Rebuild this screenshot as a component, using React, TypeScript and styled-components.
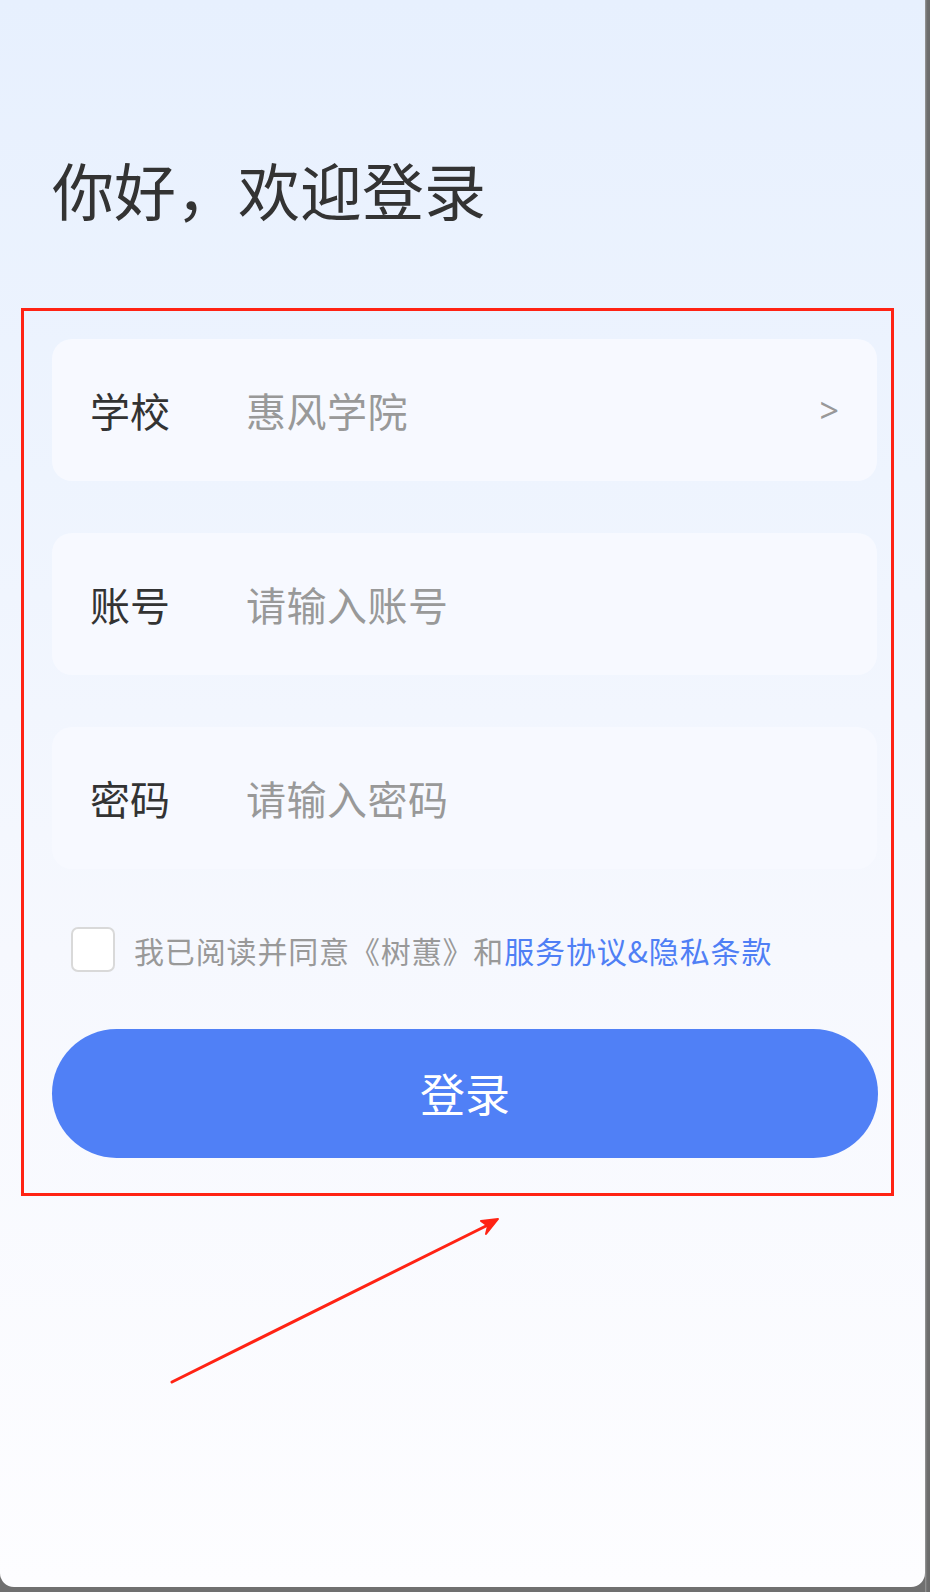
import React from "react";
import styled, { createGlobalStyle } from "styled-components";

const GlobalStyle = createGlobalStyle`
  html, body {
    margin: 0;
    padding: 0;
    background: #5c5c5c;
  }
  * {
    box-sizing: border-box;
  }
`;

const Screen = styled.div`
  width: 930px;
  height: 1592px;
  display: flex;
  flex-direction: row;
  background: #707070;
  font-family: "Noto Sans CJK SC", "Noto Sans", sans-serif;
  overflow: hidden;
`;

const Panel = styled.div`
  position: relative;
  width: 925px;
  height: 1587px;
  border-radius: 0 0 14px 14px;
  background: linear-gradient(180deg, #e7f0fe 0%, #eef4fe 30%, #f6f8fe 60%, #fdfdff 100%);
  display: flex;
  flex-direction: column;
`;

const SideStrip = styled.div`
  width: 5px;
  height: 1592px;
  background: linear-gradient(90deg, #9a9a9a 0px, #6e6e6e 2px, #6a6a6a 5px);
`;

const Title = styled.h1`
  margin: 158px 0 0 52px;
  font-size: 62px;
  line-height: 1;
  font-weight: 400;
  color: #333333;
`;

const Annotated = styled.div`
  margin: 88px 0 0 21px;
  width: 873px;
  border: 3px solid #ff2314;
  padding: 28px 14px 35px 28px;
  display: flex;
  flex-direction: column;
`;

const FieldCard = styled.div<{ $gap?: number }>`
  height: 142px;
  width: 825px;
  margin-top: ${(p) => p.$gap ?? 0}px;
  border-radius: 20px;
  background: #f7f9ff;
  display: flex;
  align-items: center;
  padding: 0 38px;
`;

const FieldLabel = styled.span`
  width: 156px;
  font-size: 40px;
  line-height: 1;
  color: #333333;
`;

const FieldValue = styled.span`
  flex: 1;
  font-size: 40px;
  line-height: 1;
  color: #999999;
  letter-spacing: 0.5px;
`;

const Chevron = styled.span`
  font-family: "Noto Sans", sans-serif;
  font-size: 34px;
  line-height: 1;
  color: #999999;
`;

const AgreeRow = styled.div`
  margin: 58px 0 0 19px;
  display: flex;
  align-items: center;
  gap: 19px;
`;

const CheckBox = styled.span`
  width: 44px;
  height: 45px;
  border: 2px solid #d9d9d9;
  border-radius: 7px;
  background: #ffffff;
  flex-shrink: 0;
`;

const AgreeText = styled.span`
  font-size: 30px;
  line-height: 1;
  color: #999999;
  letter-spacing: 0.85px;
`;

const AgreeLink = styled.span`
  color: #4f7ff5;
`;

const LoginButton = styled.button`
  margin-top: 57px;
  width: 826px;
  height: 129px;
  border: none;
  border-radius: 65px;
  background: #5080f6;
  color: #ffffff;
  font-family: "Noto Sans CJK SC", "Noto Sans", sans-serif;
  font-size: 45px;
  line-height: 1;
  display: flex;
  align-items: center;
  justify-content: center;
  padding-bottom: 4px;
`;

const ArrowMark = styled.svg`
  position: absolute;
  left: 0;
  top: 0;
  pointer-events: none;
`;

const fields = [
  { label: "学校", value: "惠风学院", chevron: true },
  { label: "账号", value: "请输入账号", chevron: false },
  { label: "密码", value: "请输入密码", chevron: false },
];

export default function App() {
  return (
    <>
      <GlobalStyle />
      <Screen>
        <Panel>
          <Title>你好，欢迎登录</Title>
          <Annotated>
            {fields.map((f, i) => (
              <FieldCard key={f.label} $gap={i === 0 ? 0 : 52}>
                <FieldLabel>{f.label}</FieldLabel>
                <FieldValue>{f.value}</FieldValue>
                {f.chevron && <Chevron>&gt;</Chevron>}
              </FieldCard>
            ))}
            <AgreeRow>
              <CheckBox />
              <AgreeText>
                我已阅读并同意《树蕙》和<AgreeLink>服务协议&amp;隐私条款</AgreeLink>
              </AgreeText>
            </AgreeRow>
            <LoginButton>登录</LoginButton>
          </Annotated>
          <ArrowMark width="925" height="1587" viewBox="0 0 925 1587">
            <path d="M172 1382 L488 1225" stroke="#ff2314" strokeWidth="3" strokeLinecap="round" fill="none" />
            <path d="M498 1219 L481 1221 L488 1226 L486 1234 Z" fill="#ff2314" stroke="#ff2314" strokeWidth="2" strokeLinejoin="round" />
          </ArrowMark>
        </Panel>
        <SideStrip />
      </Screen>
    </>
  );
}
